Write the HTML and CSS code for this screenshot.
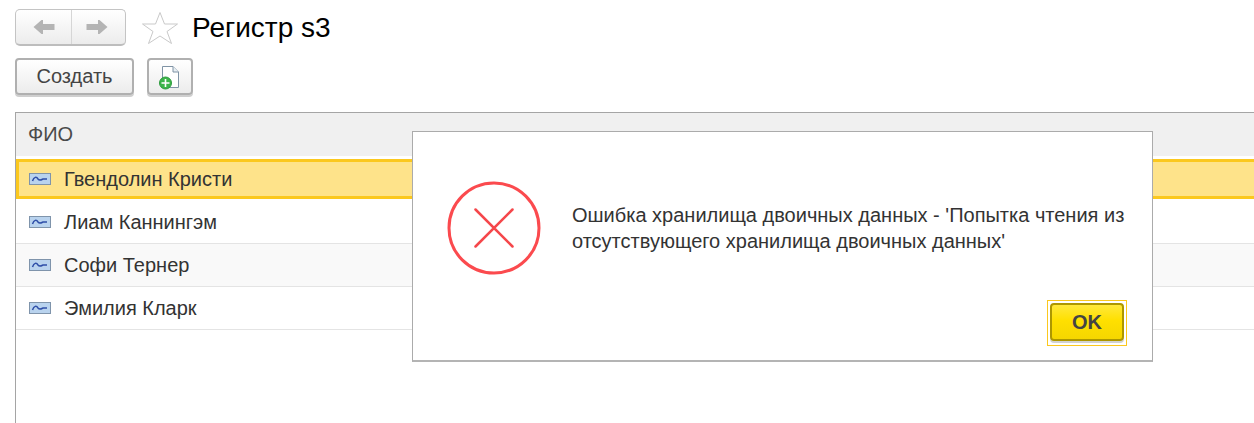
FILE: index.html
```html
<!DOCTYPE html>
<html lang="ru">
<head>
    <meta charset="UTF-8">
    <title>Регистр s3</title>
    <link rel="stylesheet" href="styles.css">
</head>
<body>
    <div class="title-row">
        <div class="nav-group">
            <div class="nav-btn">
                <svg width="24" height="16" viewBox="0 0 24 16"><path d="M1.500 8 L9.500 1 H11 V5 H22.500 V11 H11 V15 H9.500 Z" fill="#b4b4b4"/></svg>
            </div>
            <div class="nav-btn nav-btn-next">
                <svg width="24" height="16" viewBox="0 0 24 16"><path d="M22.500 8 L14.500 1 H13 V5 H1.500 V11 H13 V15 H14.500 Z" fill="#b4b4b4"/></svg>
            </div>
        </div>
        <svg class="star" width="38" height="34" viewBox="0 0 38 34"><path d="M19 1.500 L23.500 13 L36.500 13 L26 20.500 L30.500 32.500 L19 25 L7.500 32.500 L12 20.500 L1.500 13 L14.500 13 Z" fill="#fff" stroke="#c9c9c9" stroke-width="1"/></svg>
        <h1 class="title">Регистр s3</h1>
    </div>
    <div class="command-row">
        <button class="btn btn-create">Создать</button>
        <button class="btn btn-icon">
            <svg width="24" height="28" viewBox="0 0 24 28">
                <path d="M4.500 3.500 H15 L20.500 9 V24.500 H4.500 Z" fill="#fff" stroke="#7f93a5" stroke-width="1"/>
                <path d="M15 3.500 V9 H20.500" fill="#e8eef3" stroke="#7f93a5" stroke-width="1"/>
                <circle cx="7.500" cy="20" r="6" fill="#3cb54a" stroke="#2b9a3c" stroke-width="1"/>
                <path d="M7.500 16 V24 M3.500 20 H11.500" stroke="#fff" stroke-width="1.600"/>
            </svg>
        </button>
    </div>

    <div class="table">
        <div class="table-head">ФИО</div>
        <div class="row row-selected">
            <svg class="row-icon" width="22" height="12" viewBox="0 0 22 12"><rect x="0.500" y="0.500" width="21" height="11" fill="#b9d3ee" stroke="#7f94ab"/><path d="M3.500 8 C5 3.500 7.500 3.500 9 6 C10.500 8 12 7 14 6 H18" fill="none" stroke="#2f4fa8" stroke-width="1.500"/></svg>
            <span>Гвендолин Кристи</span>
        </div>
        <div class="row">
            <svg class="row-icon" width="22" height="12" viewBox="0 0 22 12"><rect x="0.500" y="0.500" width="21" height="11" fill="#b9d3ee" stroke="#7f94ab"/><path d="M3.500 8 C5 3.500 7.500 3.500 9 6 C10.500 8 12 7 14 6 H18" fill="none" stroke="#2f4fa8" stroke-width="1.500"/></svg>
            <span>Лиам Каннингэм</span>
        </div>
        <div class="row row-alt">
            <svg class="row-icon" width="22" height="12" viewBox="0 0 22 12"><rect x="0.500" y="0.500" width="21" height="11" fill="#b9d3ee" stroke="#7f94ab"/><path d="M3.500 8 C5 3.500 7.500 3.500 9 6 C10.500 8 12 7 14 6 H18" fill="none" stroke="#2f4fa8" stroke-width="1.500"/></svg>
            <span>Софи Тернер</span>
        </div>
        <div class="row">
            <svg class="row-icon" width="22" height="12" viewBox="0 0 22 12"><rect x="0.500" y="0.500" width="21" height="11" fill="#b9d3ee" stroke="#7f94ab"/><path d="M3.500 8 C5 3.500 7.500 3.500 9 6 C10.500 8 12 7 14 6 H18" fill="none" stroke="#2f4fa8" stroke-width="1.500"/></svg>
            <span>Эмилия Кларк</span>
        </div>
    </div>

    <div class="dialog">
        <div class="dialog-body">
            <svg class="dialog-icon" width="94" height="94" viewBox="0 0 94 94">
                <circle cx="47" cy="47" r="45" fill="none" stroke="#fb4a4e" stroke-width="3"/>
                <path d="M28.500 28.500 L65.500 65.500 M65.500 28.500 L28.500 65.500" stroke="#f5474b" stroke-width="2.500" stroke-linecap="round"/>
            </svg>
            <p class="dialog-text">Ошибка хранилища двоичных данных - 'Попытка чтения из отсутствующего хранилища двоичных данных'</p>
        </div>
        <div class="dialog-footer">
            <div class="ok-focus"><button class="btn-ok">OK</button></div>
        </div>
    </div>
</body>
</html>
```

FILE: styles.css
```css
html, body {
    height: 100%;
    overflow: hidden;
}
body {
    margin: 0;
    background-color: white;
    font-family: "Liberation Sans", Arial, sans-serif;
    color: #333;
    position: relative;
}
.title-row {
    display: flex;
    align-items: center;
    padding: 9px 0 0 15px;
    height: 37px;
}
.nav-group {
    display: flex;
    width: 111px;
    height: 37px;
    box-sizing: border-box;
    border: 1px solid #c4c4c4;
    border-bottom: 2px solid #bdbdbd;
    border-radius: 5px;
    background: linear-gradient(#ffffff, #ececec);
}
.nav-btn {
    flex: 1;
    display: flex;
    align-items: center;
    justify-content: center;
}
.nav-btn-next {
    flex: 0 0 54px;
    box-sizing: border-box;
    padding-right: 4px;
    border-left: 1px solid #d6d6d6;
}
.star {
    margin-left: 15px;
}
.title {
    margin: 0 0 0 13px;
    font-size: 28px;
    font-weight: normal;
    color: #000;
}
.command-row {
    display: flex;
    gap: 13px;
    padding: 12px 0 2px 15px;
}
.btn {
    box-sizing: border-box;
    height: 37px;
    border: 2px solid #b0b0b0;
    border-radius: 4px;
    box-shadow: 0 2px 0 #cfcfcf;
    background: linear-gradient(#ffffff, #ececec);
    padding: 0;
    font-family: inherit;
    font-size: 20px;
    color: #444;
}
.btn-create {
    width: 119px;
}
.btn-icon {
    width: 46px;
    display: flex;
    align-items: center;
    justify-content: center;
}
.table {
    margin: 15px 0 0 15px;
    width: 1300px;
    height: 320px;
    border-left: 1px solid #a5a5a5;
    border-top: 1px solid #a5a5a5;
}
.table-head {
    display: flex;
    align-items: center;
    height: 43px;
    padding-left: 12px;
    background-color: #f0f0f0;
    font-size: 20px;
    color: #4a4a4a;
    margin-bottom: 3px;
}
.row {
    display: flex;
    align-items: center;
    box-sizing: border-box;
    height: 43px;
    padding-left: 13px;
    border-bottom: 1px solid #e4e4e4;
    font-size: 20px;
    color: #333;
}
.row-alt {
    background-color: #f9f9f9;
}
.row-selected {
    height: 40px;
    margin-bottom: 2px;
    padding-left: 10px;
    border: 3px solid #fbc81e;
    background-color: #fee38a;
}
.row-icon {
    flex: none;
    margin-right: 13px;
}
.dialog {
    position: absolute;
    left: 412px;
    top: 131px;
    box-sizing: border-box;
    width: 741px;
    height: 231px;
    border: 1px solid #ababab;
    border-bottom: 2px solid #b4b4b4;
    background-color: white;
    display: flex;
    flex-direction: column;
    justify-content: space-between;
}
.dialog-body {
    display: flex;
    align-items: center;
    padding: 49px 0 0 34px;
}
.dialog-icon {
    flex: none;
}
.dialog-text {
    margin: 0 0 0 31px;
    width: 570px;
    font-size: 20px;
    line-height: 26px;
    color: #333;
}
.dialog-footer {
    display: flex;
    justify-content: flex-end;
    padding: 0 25px 14px 0;
}
.ok-focus {
    padding: 2px;
    border: 1px solid #fbc81e;
    width: 74px;
    height: 40px;
}
.btn-ok {
    display: block;
    box-sizing: border-box;
    width: 74px;
    height: 38px;
    padding: 0;
    border: 2px solid #ad9700;
    border-radius: 4px;
    box-shadow: 0 2px 0 #d2d2d2;
    background: linear-gradient(#ffe83c, #ffe000 45%, #f5d600);
    font-family: inherit;
    font-size: 20px;
    font-weight: bold;
    color: #444;
}
```
